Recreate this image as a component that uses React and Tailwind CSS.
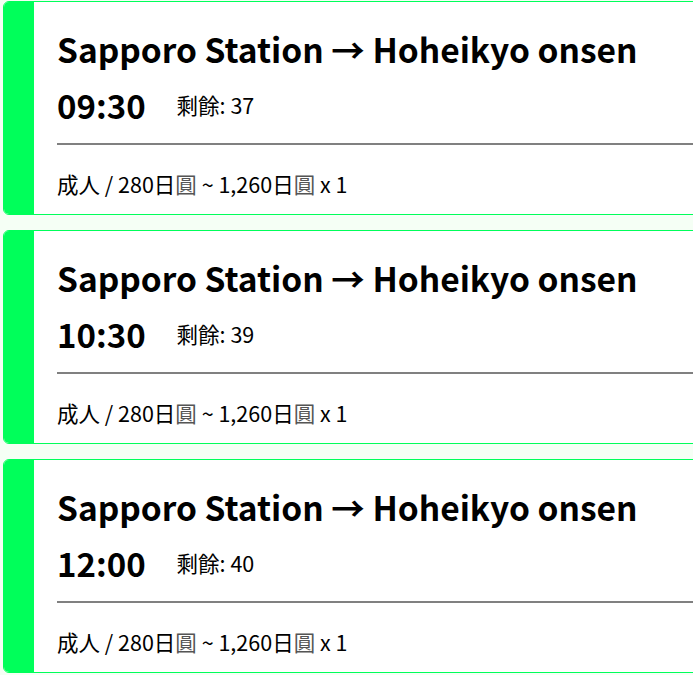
import React from "react";

const trips = [
  { time: "09:30", left: 37 },
  { time: "10:30", left: 39 },
  { time: "12:00", left: 40 },
];

function Card({ time, left }) {
  return (
    <div className="flex h-[214px] w-[720px] rounded-l-[6px] border border-[#00ff5a] bg-white">
      <div className="w-[30px] shrink-0 rounded-l-[5px] bg-[#00ff5a]" />
      <div className="flex flex-1 flex-col pl-[23px] pt-[27px]">
        <div className="whitespace-nowrap text-[33.5px] font-bold leading-[40px] text-black">
          Sapporo Station → Hoheikyo onsen
        </div>
        <div className="mt-[16px] flex h-[40px] items-center">
          <span className="text-[33px] font-bold leading-[40px] text-black">{time}</span>
          <span className="ml-[31px] text-[21.5px] leading-[28px] text-black">剩餘: {left}</span>
        </div>
        <div className="mt-[18px] h-[2px] bg-[#808080]" />
        <div className="mt-[25px] whitespace-nowrap text-[21.5px] leading-[28px] text-black">
          成人 / 280日<span className="font-['Noto_Sans_CJK_TC'] text-[#555]">圓</span> ~ 1,260日<span className="font-['Noto_Sans_CJK_TC'] text-[#555]">圓</span> x 1
        </div>
      </div>
    </div>
  );
}

export default function App() {
  return (
    <div
      className="min-h-[675px] w-full overflow-hidden bg-[#f5fff5] pl-[3px] pt-[1px]"
      style={{ fontFamily: '"Noto Sans CJK JP", "Noto Sans", sans-serif' }}
    >
      <div className="flex flex-col gap-[15px]">
        {trips.map((t) => (
          <Card key={t.time} {...t} />
        ))}
      </div>
    </div>
  );
}
